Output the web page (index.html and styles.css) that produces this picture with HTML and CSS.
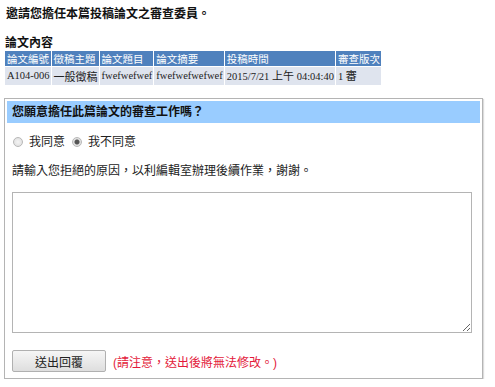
FILE: index.html
```html
<!DOCTYPE html>
<html lang="zh-Hant">
<head>
<meta charset="utf-8">
<link rel="stylesheet" href="styles.css">
</head>
<body>
<h1 class="title">邀請您擔任本篇投稿論文之審查委員。</h1>
<h2 class="section-title">論文內容</h2>
<table class="info">
  <thead>
    <tr><th>論文編號</th><th>徵稿主題</th><th>論文題目</th><th>論文摘要</th><th class="wide">投稿時間</th><th>審查版次</th></tr>
  </thead>
  <tbody>
    <tr><td>A104-006</td><td class="cjk">一般徵稿</td><td>fwefwefwef</td><td>fwefwefwefwef</td><td class="wide">2015/7/21 <span class="cjk">上午</span> 04:04:40</td><td>1 <span class="cjk">審</span></td></tr>
  </tbody>
</table>
<div class="box">
  <div class="box-head">您願意擔任此篇論文的審查工作嗎？</div>
  <div class="box-body">
    <div class="choices">
      <label class="choice"><input type="radio" name="agree" class="radio">我同意</label>
      <label class="choice"><input type="radio" name="agree" class="radio" checked>我不同意</label>
    </div>
    <p class="prompt">請輸入您拒絕的原因，以利編輯室辦理後續作業，謝謝。</p>
    <textarea class="reason"></textarea>
    <div class="actions">
      <button class="submit" type="button">送出回覆</button>
      <span class="warn">(請注意，送出後將無法修改。)</span>
    </div>
  </div>
</div>
</body>
</html>
```
FILE: styles.css
```css
html, body {
  margin: 0;
  background: #fff;
}
body {
  padding: 6px 4px 0 4px;
  font-family: "Liberation Sans", "Noto Sans CJK TC", sans-serif;
  font-size: 12px;
  color: #111;
}
.title {
  margin: 0 0 0 2px;
  font-size: 12px;
  line-height: 16px;
  font-weight: bold;
}
.section-title {
  margin: 14px 0 0 1px;
  font-size: 12px;
  line-height: 14px;
  font-weight: bold;
}
.info {
  border-collapse: separate;
  border-spacing: 1px;
  font-family: "Liberation Serif", "Noto Sans CJK TC", serif;
  font-size: 10.5px;
}
.info th {
  background: #4f81bd;
  color: #fff;
  font-weight: normal;
  font-family: "Noto Sans CJK TC", sans-serif;
  font-size: 10.5px;
  text-align: left;
  height: 15px;
  line-height: 15px;
  padding: 0 1px 0 2px;
  white-space: nowrap;
}
.info td {
  background: #dfe4ee;
  color: #222;
  height: 16px;
  line-height: 16px;
  padding: 0 1px 0 2px;
  white-space: nowrap;
}
.info .wide {
  min-width: 104px;
}
.cjk {
  font-family: "Noto Sans CJK TC", sans-serif;
  font-size: 11px;
}
.box {
  margin-top: 12px;
  width: 473px;
  border: 1px solid #b4b4b4;
  box-shadow: 1px 1px 1px #dcdcdc;
  padding: 2px;
}
.box-head {
  background: #99ccff;
  height: 22px;
  line-height: 22px;
  padding-left: 5px;
  font-weight: bold;
  color: #111;
}
.box-body {
  padding: 0 0 4px 5px;
}
.choices {
  display: flex;
  align-items: center;
  gap: 6px;
  margin-top: 11px;
  height: 16px;
  line-height: 16px;
}
.choice {
  display: flex;
  align-items: center;
  color: #222;
}
.radio {
  appearance: none;
  -webkit-appearance: none;
  width: 10px;
  height: 10px;
  margin: 0 6px 0 1px;
  border: 1px solid #b8b8b8;
  border-radius: 50%;
  background: radial-gradient(circle, #f4f4f4 0, #dcdcdc 100%);
}
.radio:checked {
  background: radial-gradient(circle, #555 0, #555 2px, #e0e0e0 3px, #e8e8e8 100%);
}
.prompt {
  margin: 13px 0 0 0;
  line-height: 16px;
  color: #222;
}
.reason {
  display: block;
  box-sizing: border-box;
  margin-top: 13px;
  width: 460px;
  height: 141px;
  border: 1px solid #b4b4b4;
  resize: both;
  padding: 2px;
}
.actions {
  display: flex;
  align-items: center;
  gap: 7px;
  margin-top: 17px;
  height: 22px;
}
.submit {
  width: 94px;
  height: 22px;
  border: 1px solid #b0b0b0;
  border-radius: 2px;
  background: linear-gradient(#f6f6f6, #dedede);
  font-family: "Noto Sans CJK TC", sans-serif;
  font-size: 12px;
  color: #222;
  padding: 0;
}
.warn {
  color: #e3193a;
  font-size: 12px;
}
```
